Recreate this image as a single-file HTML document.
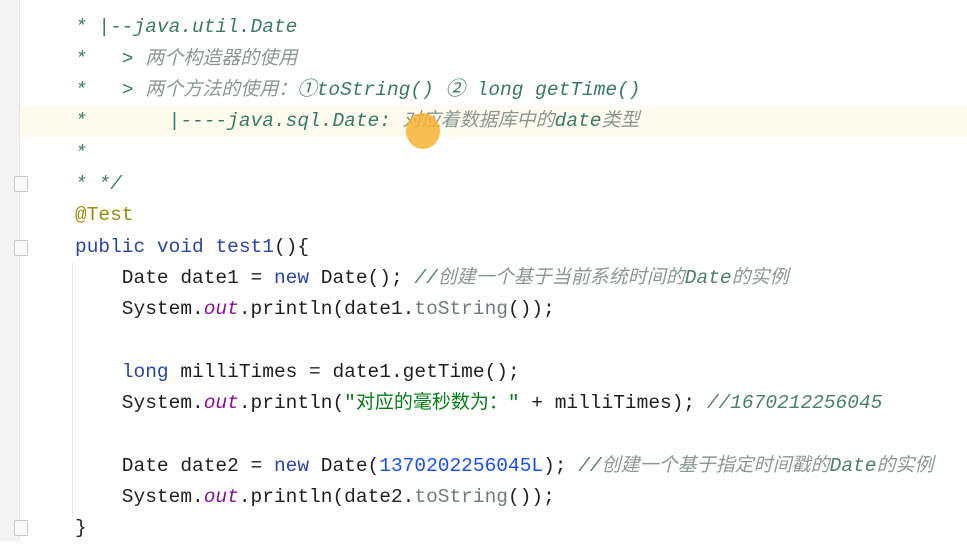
<!DOCTYPE html>
<html><head><meta charset="utf-8"><style>
body{margin:0;width:967px;height:541px;overflow:hidden;background:#fff;position:relative;font-family:"Liberation Mono","Noto Sans CJK SC",monospace;font-size:19.5px;color:#1f1f1f}
.g{position:absolute;left:0;top:0;width:19px;height:541px;background:#f3f3f3;border-right:1px solid #e6e6e6}
.hl{position:absolute;left:20px;top:106px;width:947px;height:31px;background:#fdfaee}
.l{position:absolute;left:75px;height:31px;line-height:31px;white-space:pre}
.l span{line-height:1}
.dc{color:#3b7a68;font-style:italic}
.cj{font-family:"Noto Sans CJK SC",sans-serif;font-size:19px;color:#8b9892;font-style:italic}
.kw{color:#2a45a6}
.an{color:#9e880d}
.out{color:#871094;font-style:italic}
.gr{color:#6f7b80}
.num{color:#1750eb}
.str{color:#067d17}
.cm{color:#4a8070;font-style:italic}
.dot{position:absolute;left:406px;top:113px;width:34px;height:36px;border-radius:50%;background:rgba(247,177,50,.85)}
.fold{position:absolute;left:14px;width:12px;height:14px;border:1px solid #c8c8c8;background:#fafafa;border-radius:2px}
.ig{position:absolute;left:72px;top:263px;width:1px;height:256px;background:#e8e8e8}
</style></head><body>
<div class="g"></div>
<div class="hl"></div>
<div class="ig"></div>
<div class="fold" style="top:176px"></div>
<div class="fold" style="top:240px"></div>
<div class="fold" style="top:520px"></div>
<div class="l dc" style="top:-19px"> *</div>
<div class="l dc" style="top:12px">* |--java.util.Date</div>
<div class="l dc" style="top:44px">*   &gt; <span class="cj">两个构造器的使用</span></div>
<div class="l dc" style="top:75px">*   &gt; <span class="cj">两个方法的使用：</span>①toString() ② long getTime()</div>
<div class="l dc" style="top:106px">*       |----java.sql.Date: <span class="cj">对应着数据库中的</span>date<span class="cj">类型</span></div>
<div class="l dc" style="top:138px">*</div>
<div class="l dc" style="top:169px">* */</div>
<div class="l an" style="top:200px">@Test</div>
<div class="l" style="top:232px"><span class="kw">public void</span> <span class="kw">test1</span>(){</div>
<div class="l" style="top:263px">    Date date1 = <span class="kw">new</span> Date(); <span class="cm">//<span class="cj">创建一个基于当前系统时间的</span>Date<span class="cj">的实例</span></span></div>
<div class="l" style="top:294px">    System.<span class="out">out</span>.println(date1.<span class="gr">toString</span>());</div>
<div class="l" style="top:357px">    <span class="kw">long</span> milliTimes = date1.getTime();</div>
<div class="l" style="top:388px">    System.<span class="out">out</span>.println(<span class="str">"<span style="font-family:'Noto Sans CJK SC',sans-serif;font-size:19px">对应的毫秒数为：</span>"</span> + milliTimes); <span class="cm">//1670212256045</span></div>
<div class="l" style="top:451px">    Date date2 = <span class="kw">new</span> Date(<span class="num">1370202256045L</span>); <span class="cm">//<span class="cj">创建一个基于指定时间戳的</span>Date<span class="cj">的实例</span></span></div>
<div class="l" style="top:482px">    System.<span class="out">out</span>.println(date2.<span class="gr">toString</span>());</div>
<div class="l" style="top:513px">}</div>
<div class="dot"></div>
</body></html>
